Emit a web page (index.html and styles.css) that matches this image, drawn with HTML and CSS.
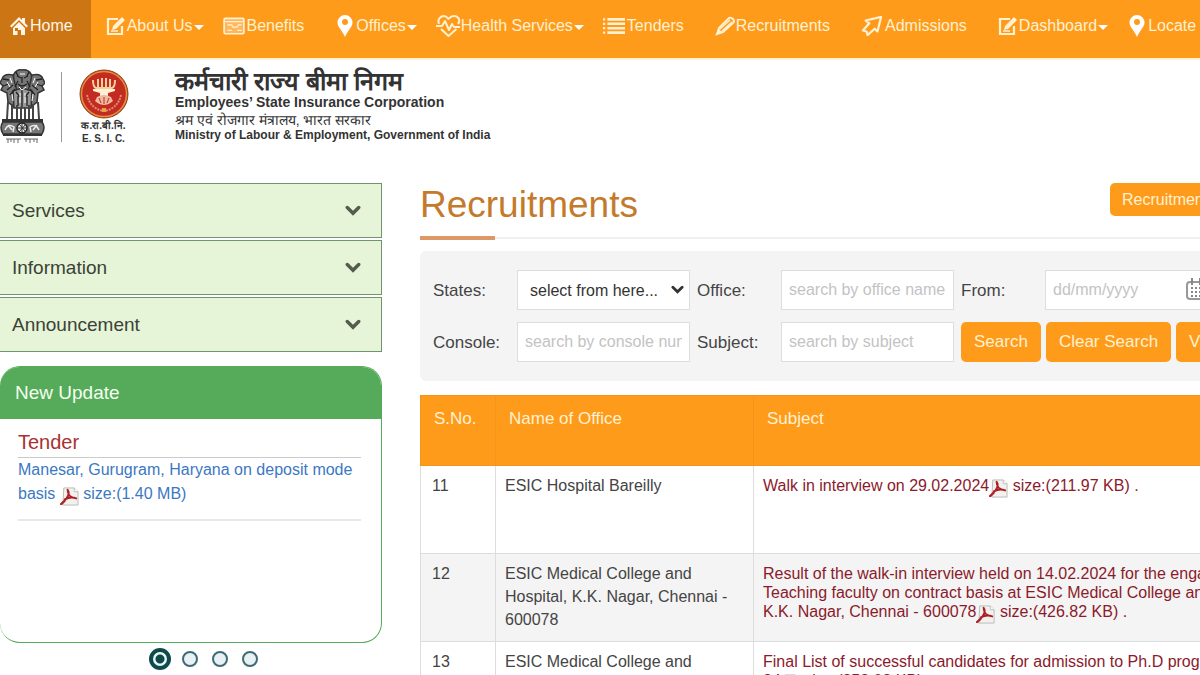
FILE: index.html
```html
<!DOCTYPE html>
<html lang="en">
<head>
<meta charset="utf-8">
<title>Recruitments - Employees' State Insurance Corporation</title>
<link rel="stylesheet" href="styles.css">
</head>
<body>
<svg class="sprite" aria-hidden="true">
  <symbol id="i-home" viewBox="0 0 20 20"><path d="M10 1 1 10l1.500 1.500L10 4l7.500 7.500L19 10l-3-3V2h-3v2z" fill="currentColor"/><path d="M10 6l6 6v7h-4v-5H8.500v5H4v-7z" fill="currentColor"/><path d="M6 12h3v3H6z" fill="#cb7515"/></symbol>
  <symbol id="i-edit" viewBox="0 0 20 20"><path d="M12 3H2v15h14v-8" fill="none" stroke="currentColor" stroke-width="2.200"/><path d="M7 10l9-9 3 3-9 9-4 1z" fill="currentColor"/><path d="M5 15h7" stroke="currentColor" stroke-width="1.500"/></symbol>
  <symbol id="i-card" viewBox="0 0 20 16"><rect x="1" y="1" width="18" height="14" rx="1" fill="#ffb75c" stroke="currentColor" stroke-width="1.500"/><path d="M2 4h16M4 7h4l1 2h4l1-2h3M4 12h4M13 12h4" fill="none" stroke="currentColor" stroke-width="1"/></symbol>
  <symbol id="i-pin" viewBox="0 0 16 22"><path fill-rule="evenodd" d="M8 0a7.500 7.500 0 0 1 7.500 7.500C15.500 12 11 15 8 22 5 15 .5 12 .5 7.500A7.500 7.500 0 0 1 8 0zm0 4a3 3 0 1 0 0 6 3 3 0 0 0 0-6z" fill="#fff"/></symbol>
  <symbol id="i-heart" viewBox="0 0 25 22"><path d="M3 9C1 4 5 1 8 1s4 3 4.500 3S14 1 18 1s7 4 4 8M5 14l7.500 7 8-7M0 11h6l3-5 4 9 3-6 2 3h6" fill="none" stroke="currentColor" stroke-width="2" stroke-linejoin="round"/></symbol>
  <symbol id="i-list" viewBox="0 0 20 16"><path d="M0 2h2M0 6h2M0 10h2M0 14h2" stroke="currentColor" stroke-width="2"/><path d="M4 2h16M4 6h16M4 10h16M4 14h16" stroke="currentColor" stroke-width="2.400"/></symbol>
  <symbol id="i-pencil" viewBox="0 0 20 20"><path d="M2 18l2-6L14 2q2-1 4 1t0 4L8 16z" fill="none" stroke="currentColor" stroke-width="2"/><path d="M5 13L15 4M7 15L17 6M2 18l2-4 2 2z" stroke="currentColor" stroke-width="1.500" fill="currentColor"/></symbol>
  <symbol id="i-arrow" viewBox="0 0 24 22"><path d="M22 1L5 5l4 3-7 8 4 1 1 4 8-7 3 3z" fill="none" stroke="currentColor" stroke-width="2.400" stroke-linejoin="round"/></symbol>
  <symbol id="i-chevron" viewBox="0 0 14 10"><path d="M2 2l5 5 5-5" fill="none" stroke="currentColor" stroke-width="3" stroke-linecap="round"/></symbol>
  <symbol id="i-calendar" viewBox="0 0 20 22"><rect x="1" y="4" width="18" height="17" rx="3" fill="none" stroke="#999" stroke-width="2"/><path d="M6 0v7M14 0v7" stroke="#888" stroke-width="2"/><path d="M5 10h2M9 10h2M13 10h2M5 14h2M9 14h2M13 14h2M5 18h2M9 18h2M13 18h2" stroke="#888" stroke-width="2"/></symbol>
  <symbol id="i-pdf" viewBox="0 0 20 20"><path d="M4 1h11l4 4v14H3z" fill="#f3f1ee" stroke="#b4bab4"/><path d="M15 1v4h4" fill="#fff" stroke="#b9bfba"/><path d="M8 3c3 4-1 10-7 15M8 3c0 6 3 8 9 9M5 13c4-2 7-3 12-1" fill="none" stroke="#ad1f24" stroke-width="2" stroke-linecap="round"/><path d="M0 19l4-5 2 1-4 4z" fill="#b5232a"/></symbol>
</svg>

<div class="page">
  <nav class="nav" aria-label="Main">
    <a class="nav-item active" href="#"><svg class="ico"><use href="#i-home"/></svg>Home</a>
    <a class="nav-item has-menu" href="#"><svg class="ico"><use href="#i-edit"/></svg>About Us<span class="caret"></span></a>
    <a class="nav-item" href="#"><svg class="ico wide"><use href="#i-card"/></svg>Benefits</a>
    <a class="nav-item has-menu" href="#"><svg class="ico pin"><use href="#i-pin"/></svg>Offices<span class="caret"></span></a>
    <a class="nav-item has-menu" href="#"><svg class="ico heart"><use href="#i-heart"/></svg>Health Services<span class="caret"></span></a>
    <a class="nav-item" href="#"><svg class="ico wide"><use href="#i-list"/></svg>Tenders</a>
    <a class="nav-item" href="#"><svg class="ico"><use href="#i-pencil"/></svg>Recruitments</a>
    <a class="nav-item" href="#"><svg class="ico wide"><use href="#i-arrow"/></svg>Admissions</a>
    <a class="nav-item has-menu" href="#"><svg class="ico"><use href="#i-edit"/></svg>Dashboard<span class="caret"></span></a>
    <a class="nav-item" href="#"><svg class="ico pin"><use href="#i-pin"/></svg>Locate Us</a>
  </nav>

  <header class="brand">
    <svg class="emblem" viewBox="0 0 45 75" role="img" aria-label="State Emblem of India">
      <g fill="#777" stroke="#333" stroke-width="1.500">
        <path d="M14 5q3-5 8-4 6-1 9 4l2 8-3 9H15l-3-9z"/>
        <path d="M13 6Q4 4 2 10l-2 4 3 3-2 4 6 3 1 9 6 5 4-13-3-10z"/>
        <path d="M32 6q9-2 11 4l2 4-3 3 2 4-6 3-1 9-6 5-4-13 3-10z"/>
        <path d="M13 22l9-3 10 3-1 17H14z" fill="#999"/>
      </g>
      <g fill="none" stroke="#222" stroke-width="1.300">
        <path d="M17 7l4 2M28 7l-4 2M22 8v6M18 15q4 4 9 0M18 12l-3 6M27 12l3 6M16 3l2 4M29 3l-2 4M3 10l6 1M42 10l-6 1M3 17l6-2M42 17l-6-2M7 21l6-5M38 21l-6-5M10 26l5-6M35 26l-5-6M16 23l4 5M29 23l-4 5M22 20v18M18 27v10M27 27v10"/>
        <path d="M8 33l-1 17M12 35v15M17 36v14M21 38v12M25 38v12M29 36v14M33 35v15M38 33l1 17" stroke="#444" stroke-width="2"/>
      </g>
      <g stroke="#fff" stroke-width="1" fill="none"><path d="M10 9l2 5M35 9l-2 5M7 13l3 5M38 13l-3 5M20 5h5M19 18l3 3 4-3M12 25l1 7M33 25l-1 7M20 24v10M25 24v10"/></g>
      <rect x="2" y="50" width="41" height="3" fill="#333"/>
      <path d="M3 53h39q4 5 0 12H3q-4-7 0-12z" fill="#777" stroke="#333" stroke-width="1.500"/>
      <circle cx="22" cy="59" r="5" fill="#eee" stroke="#222" stroke-width="1.500"/>
      <path d="M22 54v10M17 59h10M19 55l7 8M26 55l-7 8" stroke="#333" stroke-width="1"/>
      <path d="M5 61q3-7 9-3l-1 5M39 61q-3-7-9-3l1 5M8 56l4 5M37 56l-4 5" stroke="#eee" fill="none" stroke-width="1.500"/>
      <path d="M3 66h39" stroke="#333" stroke-width="2"/>
      <path d="M6 70h15M24 70h14M8 70v4M11 70v3M14 70v4M18 70v4M26 70v3M30 70v4M34 70v3M37 70v4" stroke="#666" stroke-width="1"/>
    </svg>
    <div class="esic">
      <svg class="seal" viewBox="0 0 50 50" role="img" aria-label="ESIC">
        <circle cx="25" cy="25" r="24" fill="#c32a20" stroke="#8d4a1c" stroke-width="1"/>
        <circle cx="25" cy="25" r="22.500" fill="none" stroke="#e2903f" stroke-width="1.500"/>
        <path d="M14 11q0 7 3 8h16q3-1 3-8M19 10v8M23 9v9M27 9v9M31 10v8" fill="none" stroke="#f8cf98" stroke-width="2"/>
        <path d="M14 20h22v2l-7 2v3h-8v-3l-7-2z" fill="#fff0d5"/>
        <path d="M18 28q7-4 14 0l2 4q-9 8-18 0z" fill="#edb9a0"/>
        <path d="M20 29l2 5M25 28v7M30 29l-2 5" stroke="#c8281c" stroke-width="1"/>
        <path d="M8 26q3 13 16 16M42 26q-3 13-16 16" fill="none" stroke="#e08b78" stroke-width="2" stroke-dasharray="2 1"/>
        <path d="M23 39h4v4h-4z" fill="#eda13c"/>
      </svg>
      <span class="esic-hi" lang="hi">क.रा.बी.नि.</span>
      <span class="esic-en">E. S. I. C.</span>
    </div>
    <div class="org">
      <span class="org-hi" lang="hi">कर्मचारी राज्य बीमा निगम</span>
      <span class="org-en">Employees’ State Insurance Corporation</span>
      <span class="min-hi" lang="hi">श्रम एवं रोजगार मंत्रालय, भारत सरकार</span>
      <span class="min-en">Ministry of Labour &amp; Employment, Government of India</span>
    </div>
  </header>

  <div class="columns">
    <aside class="side">
      <div class="accordion">
        <button class="acc" type="button">Services<svg class="chev"><use href="#i-chevron"/></svg></button>
        <button class="acc" type="button">Information<svg class="chev"><use href="#i-chevron"/></svg></button>
        <button class="acc" type="button">Announcement<svg class="chev"><use href="#i-chevron"/></svg></button>
      </div>
      <section class="card">
        <h2 class="card-head">New Update</h2>
        <div class="card-body">
          <h3 class="card-title">Tender</h3>
          <a class="card-link" href="#">Manesar, Gurugram, Haryana on deposit mode basis <svg class="pdf"><use href="#i-pdf"/></svg> size:(1.40 MB)</a>
        </div>
      </section>
      <div class="dots">
        <button class="dot on" type="button" aria-label="Slide 1"></button>
        <button class="dot" type="button" aria-label="Slide 2"></button>
        <button class="dot" type="button" aria-label="Slide 3"></button>
        <button class="dot" type="button" aria-label="Slide 4"></button>
      </div>
    </aside>

    <main class="main">
      <div class="title-row">
        <h1 class="title">Recruitments</h1>
        <a class="btn small" href="#">Recruitment Archive</a>
      </div>
      <form class="filters">
        <div class="filter-row">
          <div class="field"><label for="states">States:</label><span class="select-wrap"><select id="states"><option>select from here...</option></select><svg class="sel-arrow"><use href="#i-chevron"/></svg></span></div>
          <div class="field"><label for="office">Office:</label><input id="office" type="text" placeholder="search by office name"></div>
          <div class="field"><label for="from">From:</label><span class="select-wrap"><input id="from" type="text" placeholder="dd/mm/yyyy"><svg class="cal"><use href="#i-calendar"/></svg></span></div>
        </div>
        <div class="filter-row">
          <div class="field"><label for="console">Console:</label><input id="console" type="text" placeholder="search by console number"></div>
          <div class="field"><label for="subject">Subject:</label><input id="subject" type="text" placeholder="search by subject"></div>
          <div class="actions">
            <button class="btn" type="button">Search</button>
            <button class="btn" type="button">Clear Search</button>
            <button class="btn" type="button">View All</button>
          </div>
        </div>
      </form>
      <table class="list">
        <thead><tr><th class="c-no">S.No.</th><th class="c-office">Name of Office</th><th>Subject</th></tr></thead>
        <tbody>
          <tr><td class="no">11</td><td>ESIC Hospital Bareilly</td><td class="subj"><a href="#">Walk in interview on 29.02.2024<svg class="pdf"><use href="#i-pdf"/></svg> size:(211.97 KB) .</a></td></tr>
          <tr><td class="no">12</td><td>ESIC Medical College and Hospital, K.K. Nagar, Chennai - 600078</td><td class="subj"><a href="#">Result of the walk-in interview held on 14.02.2024 for the engagement of<br>Teaching faculty on contract basis at ESIC Medical College and Hospital,<br>K.K. Nagar, Chennai - 600078<svg class="pdf"><use href="#i-pdf"/></svg> size:(426.82 KB) .</a></td></tr>
          <tr><td class="no">13</td><td>ESIC Medical College and Hospital, K.K. Nagar, Chennai - 600078</td><td class="subj"><a href="#">Final List of successful candidates for admission to Ph.D programme 2023-<br>24<svg class="pdf"><use href="#i-pdf"/></svg> size:(252.03 KB) .</a></td></tr>
        </tbody>
      </table>
    </main>
  </div>
</div>
</body>
</html>
```
FILE: styles.css
```css
* { box-sizing: border-box; }
body { margin: 0; background: #fff; color: #444; font: 16px/23px "Liberation Sans", Arial, sans-serif; }
a { color: inherit; text-decoration: none; }
button, input, select { font-family: inherit; }
.sprite { display: none; }
.page { height: 100vh; overflow: hidden; }

.nav { display: flex; height: 60px; background: #ff9b1a; border-bottom: 2px solid #fdf3cf; color: #fff1d2; white-space: nowrap; overflow: hidden; }
.nav-item { display: flex; flex: none; align-items: center; padding: 0 16px 7px 15px; }
.nav-item.active { padding-left: 9px; padding-right: 18px; background: #cb7515; color: #fff5e6; }
.nav-item.has-menu { padding-right: 4px; }
.ico { flex: none; width: 20px; height: 20px; margin-right: 1px; }
.ico.wide { width: 22px; margin-right: 2px; }
.ico.heart { width: 25px; height: 22px; margin-right: 0; }
.ico.pin { height: 22px; }
.caret { margin: 3px 0 0 1px; border: 5px solid transparent; border-top-color: #fff; border-bottom: 0; }

.brand { display: flex; align-items: flex-start; padding: 9px 0 0; height: 123px; color: #333; }
.emblem { width: 45px; height: 75px; }
.esic { display: flex; flex-direction: column; align-items: center; margin: 3px 0 0 16px; padding-left: 16px; border-left: 1px solid #999; height: 70px; width: 68px; }
.seal { flex: none; width: 50px; height: 50px; margin-top: -3px; }
.esic-hi { font-size: 10px; line-height: 14px; font-weight: 700; white-space: nowrap; }
.esic-en { font-size: 10px; line-height: 12px; font-weight: 700; white-space: nowrap; }
.org { display: flex; flex-direction: column; margin-left: 46px; white-space: nowrap; }
.org-hi { font-size: 25px; line-height: 24px; font-weight: 700; }
.org-en { font-size: 14px; line-height: 18px; font-weight: 700; }
.min-hi { font-size: 14px; line-height: 18px; font-weight: 400; }
.min-en { font-size: 12px; line-height: 12px; font-weight: 700; }

.columns { display: flex; align-items: flex-start; gap: 38px; }
.side { flex: none; width: 382px; }
.accordion { display: flex; flex-direction: column; gap: 2px; }
.acc { display: flex; align-items: center; justify-content: space-between; height: 55px; padding: 0 20px 0 12px; border: 1px solid #71946f; border-left: 0; background: #e6f4d7; color: #3b4237; font-size: 19px; }
.chev { width: 16px; height: 12px; color: #555b50; }
.card { height: 277px; margin-top: 14px; border: 1px solid #55ab59; border-left: 0; border-radius: 20px; overflow: hidden; }
.card-head { margin: 0; padding: 14px 15px; background: #55ab59; color: #f4fff0; font-size: 19px; line-height: 24px; font-weight: 400; }
.card-body { padding: 12px 20px 0 18px; }
.card-title { margin: 0; padding-bottom: 4px; border-bottom: 1px solid #ccc; color: #a83232; font-size: 20px; line-height: 22px; font-weight: 400; }
.card-link { display: block; padding-bottom: 13px; border-bottom: 2px solid #e8e8e8; color: #3b78c3; line-height: 24px; }
.pdf { width: 19px; height: 19px; margin: -3px 0; vertical-align: -4px; }
.dots { display: flex; justify-content: center; align-items: center; gap: 14px; margin: 5px 0 0 28px; }
.dot { width: 16px; height: 16px; padding: 0; border: 2px solid #3f6b72; border-radius: 50%; background: #e8f1f5; }
.dot.on { width: 22px; height: 22px; margin: 0 -3px; border: 4px solid #0f4a4b; background: radial-gradient(circle, #0f4a4b 4px, #e8f8f8 5px); }

.main { flex: 1 0 900px; }
.title-row { display: flex; gap: 472px; align-items: flex-start; height: 56px; border-bottom: 2px solid #f0f0f0; }
.title { flex: none; height: 57px; margin: 0; color: #c47a2c; font-size: 37px; line-height: 44px; font-weight: 400; }
.title::after { content: ""; display: block; width: 75px; height: 4px; margin-top: 9px; background: #dd9868; }
.btn { flex: none; height: 40px; padding: 0 13px; border: 0; border-radius: 5px; background: #ff9b1a; color: #fff1d2; font-size: 17px; white-space: nowrap; }
.btn.small { height: 33px; padding: 0 12px; line-height: 33px; font-size: 16px; }
.filters { display: flex; flex-direction: column; gap: 12px; margin-top: 12px; padding: 19px 13px; border-radius: 6px; background: #f4f4f4; }
.filter-row { display: flex; gap: 7px; }
.field { display: flex; flex: none; align-items: center; }
.field label { width: 84px; font-size: 17px; }
.field input, .field select { width: 173px; height: 40px; padding: 0 7px; border: 1px solid #ddd; border-radius: 0; background: #fff; color: #333; font-size: 16px; }
.field select { padding-left: 12px; appearance: none; }
.field input::placeholder { color: #c3c3c3; opacity: 1; }
.select-wrap { display: flex; position: relative; }
.sel-arrow { position: absolute; right: 6px; top: 15px; width: 13px; height: 10px; color: #333; pointer-events: none; }
.cal { position: absolute; right: 12px; top: 8px; width: 20px; height: 22px; }
.actions { display: flex; gap: 5px; }

.list { width: 100%; margin-top: 14px; border-collapse: collapse; table-layout: fixed; }
.list th { height: 70px; padding: 11px 13px; border: 1px solid #f3941c; background: #ff9b1a; color: #fff1d2; font-size: 17px; font-weight: 400; text-align: left; vertical-align: top; }
.c-no { width: 75px; }
.c-office { width: 258px; }
.list td { height: 88px; padding: 8px 9px; border: 1px solid #ddd; vertical-align: top; }
.list td.no { padding-left: 11px; }
.list td.subj { padding-top: 10px; color: #8b1a2b; line-height: 19px; white-space: nowrap; }
.list tbody tr:nth-child(even) { background: #f4f4f4; }
```
